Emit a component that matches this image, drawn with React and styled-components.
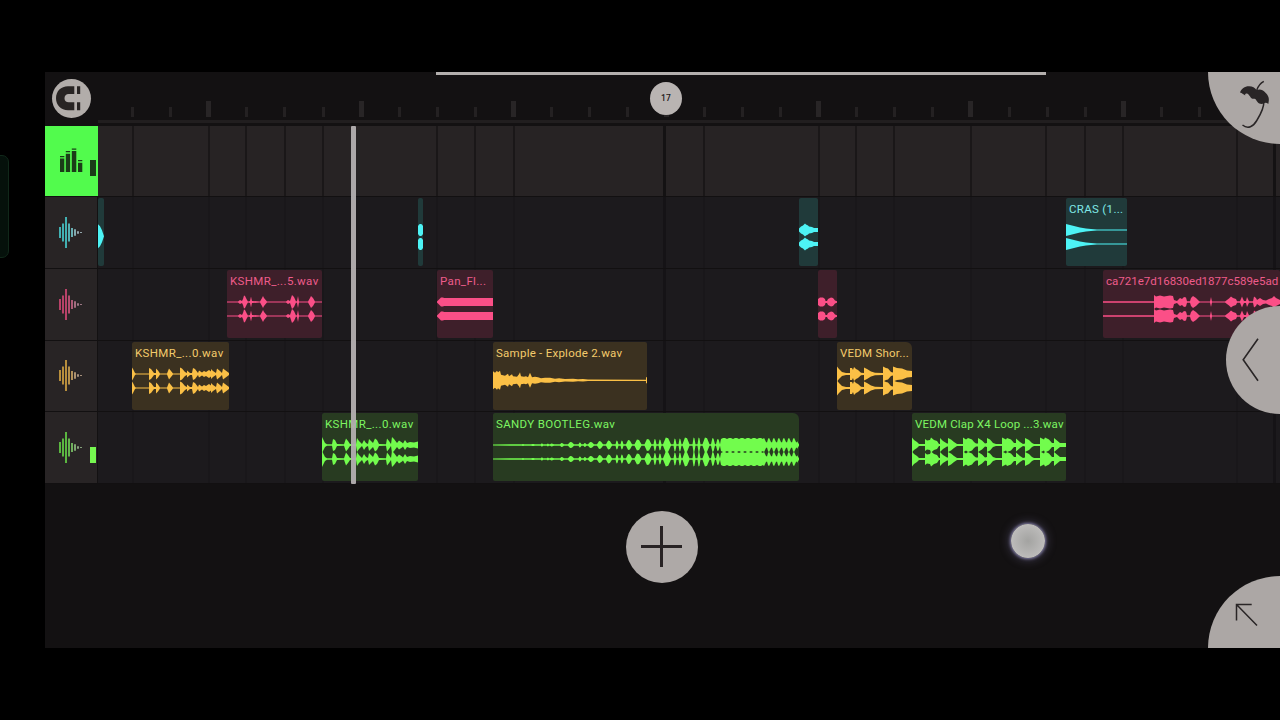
import styled, { createGlobalStyle } from 'styled-components'

const CYAN = { wave: '#4df3f5', text: '#7fe8e6', back: '#203a3a', dim: '#9fb4bb' }
const PINK = { wave: '#fb4f87', text: '#ee5c8b', back: '#3e1f2a', dim: '#a8808e' }
const GOLD = { wave: '#fbc046', text: '#f3cb6c', back: '#3b3120', dim: '#b59d86' }
const LIME = { wave: '#72fc4d', text: '#7df562', back: '#283b21', dim: '#8fae84' }

const GRID = [132, 208, 245, 284, 322, 436, 474, 513, 703, 818, 855, 893, 970, 1045, 1084, 1122, 1236]
const BARS = [663, 1273]
const LANE_X = 98

// envelopes are "x amp" pairs, mirrored around the centre line of each channel
const tracks = [
  {
    tone: CYAN,
    height: 72,
    clips: [
      { x: 98, w: 6, mono: true, env: '0 12 2 10 3 8 4 6 5 3 6 0' },
      { x: 418, w: 5, env: '0 4 1 5.5 2 6 3 6 4 5.5 5 4' },
      { x: 799, w: 19, env: '0 1.5 2 3.5 4 4.5 6 6.5 7 5.5 9 4.5 10 3.5 13 3 15 2 19 2' },
      { x: 1066, w: 61, name: 'CRAS (1...', gap: 0.32, env: '0 6 2 5.5 6 4.5 10 3.5 14 2.5 20 1.5 25 1 31 0.6 61 0.6' },
    ],
  },
  {
    tone: PINK,
    height: 72,
    clips: [
      { x: 227, w: 95, name: 'KSHMR_...5.wav', gap: 0.36, env: '0 .6 11 .6 13 2 15 1 16 3 17 6.5 18 6 20 2 21 .6 23 1 24 5.5 25 1 33 .6 35 4 36 6 37 4 40 .6 59 .6 61 2 63 1 64 4 65 7 67 5 69 .6 70 1 71 6 72 .6 81 .6 83 4 84 6 86 4 88 .6 95 .6' },
      { x: 437, w: 56, name: 'Pan_Fl...', gap: 0.35, env: '0 .5 2 2.5 4 4.5 6 4.5 7 4 56 4' },
      { x: 818, w: 19, env: '0 3 2 4.5 5 4.5 7 3 7.5 1 9 1 10 3 13 4.5 15 4 17 1.5 19 .7' },
      { x: 1103, w: 177, name: 'ca721e7d16830ed1877c589e5ad', gap: 0, env: '0 .8 51 .8 51 7 53 5.5 57 6.5 61 5.5 67 6.5 70 6 71 2 74 1 77 4 79 3 81 5 83 4.5 84 .7 87 .7 88 4 90 6 93 4 96 1 97 .6 107 .6 108 5 109 .6 122 .6 124 2 126 3.5 128 5.5 130 4 133 3 134 .7 137 .7 139 5.5 140 3 141 1 143 1 144 5 146 .7 150 .7 151 5.5 153 4 154 2 157 4 160 2 163 1.5 166 3 169 4 171 6 173 4 177 2' },
    ],
  },
  {
    tone: GOLD,
    height: 71,
    clips: [
      { x: 132, w: 97, name: 'KSHMR_...0.wav', gap: 0.36, env: '0 6.5 1 5 3 1 4 .6 17 .6 17 6 19 5 22 1 24 1 24 5.5 26 3.5 28 .6 35 .6 37 5.5 39 3 41 .6 48 .6 48 6.5 50 5.5 53 2 55 1 55 3.5 58 1 60 1 61 6 63 5 66 1 67 3.5 70 1.5 72 3 74 2 77 4 79 2.5 79 5 81 3 84 1 85 5.5 88 3 90 1 91 5.5 93 4 97 1' },
      { x: 493, w: 154, name: 'Sample - Explode 2.wav', gap: 0.25, mono: true, env: '0 9 2 7.5 4 9.5 5 8 7 9.5 8 5.500 12 4.500 15 6.500 16 4 19 6 20 4 24 3.5 26 6 27 8 28 4 31 3.500 33 4 35 3 37 7.5 39 3 42 3.5 45 3 48 2 52 2.5 57 2.5 62 1.5 66 2 72 1.2 80 1.5 85 1 90 1.3 95 .8 153 .6 153 3 154 3' },
      { x: 837, w: 75, name: 'VEDM Shor...', gap: 0.23, notch: true, env: '0 7.5 2 5 5 2 9 1 13 1 13 6 15 6 16 4 17 7 19 5 21 4 24 1.2 27 1 27 6.5 30 5 34 2.5 38 1.3 46 1 46 7.5 49 6 51 5.5 54 2 56 1.5 56 7.5 60 6 65 5.5 70 3.5 75 3' },
    ],
  },
  {
    tone: LIME,
    height: 72,
    meter: true,
    clips: [
      { x: 322, w: 96, name: 'KSHMR_...0.wav', gap: 0.36, env: '0 8 1 6 3 2 5 .8 10 .8 11 6 13 5 15 1 22 .8 24 6.5 26 4 28 1 34 .8 35 7 37 4 40 1 42 5 44 2 46 1 47 6 49 4 51 2 53 6.5 55 5 57 1 64 .8 65 6.5 67 4 69 1 70 8 72 6 75 2 77 4.5 80 2.5 81 1.5 83 5 85 2 88 3 92 2.5 96 3.5' },
      { x: 493, w: 306, name: 'SANDY BOOTLEG.wav', gap: 0.35, notch: true, beats: true },
      { x: 912, w: 154, name: 'VEDM Clap X4 Loop ...3.wav', gap: 0.17, env: '0 7.5 2 5 5 3 7 1 13 1 13 6 15 4.5 18 5 19 7.5 22 5 25 4 27 1 28 1 28 7 31 4 35 1.5 36 1.5 36 7 39 5.5 42 3 45 1 51 1 51 7.5 54 5.5 56 7 60 5.5 62 3 64 1.5 66 1.5 66 7 70 4.5 73 1.5 75 2 75 7 78 5.5 81 2 84 1 90 1 90 7.5 94 5.5 95 7 99 5.5 102 2 104 2 104 6.5 108 3 111 1 113 1.5 113 7 117 5 120 2 122 1 128 1 128 7.5 132 5.5 133 7.5 137 5.5 140 2 142 2 142 7 145 4.5 148 2 154 2' },
    ],
  },
]

// build-up: [centre, half width, amp], followed by a dense block and a spiky tail
const BUILD = [
  [30, 1, 1], [40, 2, 1], [49, 1, 1.7], [55, 1, 1.5], [59, 2, 1.5], [69, 2, 2], [78, 3, 3], [87, 1.5, 2.5],
  [92, 1.5, 2], [98, 3, 3], [107, 3, 4], [116, 3, 4.5], [124, 1.5, 4.5], [129, 1.5, 4.5], [136, 3, 5],
  [145, 3.5, 5.5], [155, 3.5, 6], [162, 1.5, 6], [167, 1.5, 5.5], [174, 4, 7.5], [182, 1.5, 6.5], [187, 1.5, 6.5],
  [193, 3.5, 7.5], [201, 1.5, 7.5], [206, 1.5, 7.5], [213, 3.5, 7.5], [220, 2, 7], [225, 2, 6],
]

function beatEnvelope() {
  let out = [0, 0.6]
  BUILD.forEach(([c, h, a]) => {
    out.push(c - h, 0.8, c - h * 0.3, a, c + h * 0.3, a * 0.9, c + h, 0.8)
  })
  for (let x = 228; x <= 269; x += 2) out.push(x, x % 3 ? 7 : 6)
  for (let x = 270; x <= 300; x += 5) out.push(x, 6, x + 1, 7.3, x + 3, 3, x + 4, 2.5)
  out.push(304, 4, 306, 0.8)
  return out
}

function wavePath(env, cy) {
  const n = Array.isArray(env) ? env : env.split(' ').map(Number)
  const top = []
  const low = []
  for (let i = 0; i < n.length; i += 2) {
    top.push(`${n[i]} ${cy - n[i + 1]}`)
    low.unshift(`${n[i]} ${cy + n[i + 1]}`)
  }
  return `M${top.concat(low).join('L')}Z`
}

const lines = (color, barColor) => [
  ...GRID.map(x => `linear-gradient(${color}, ${color}) ${x - LANE_X}px 0 / 2px 100% no-repeat`),
  ...BARS.map(x => `linear-gradient(${barColor}, ${barColor}) ${x - LANE_X}px 0 / 3px 100% no-repeat`),
].join(',')

const Clip = ({ clip, gap, tone }) => {
  const env = clip.beats ? beatEnvelope() : clip.env
  const centres = clip.mono ? [16.3] : [10, 24]
  return (
    <ClipBox $w={clip.w} $gap={gap} $back={tone.back} $notch={clip.notch}>
      <ClipName $color={tone.text} $spacing={clip.gap}>{clip.name}</ClipName>
      <svg width={clip.w} height="46" viewBox={`0 0 ${clip.w} 46`}>
        {centres.map(c => <path key={c} d={wavePath(env, c)} fill={tone.wave} />)}
      </svg>
    </ClipBox>
  )
}

const WaveIcon = ({ tone, id }) => (
  <svg width="24" height="32" viewBox="0 0 24 32">
    <defs>
      <linearGradient id={id} gradientUnits="userSpaceOnUse" x1="0" y1="0" x2="24" y2="0">
        <stop offset=".3" stopColor={tone.wave} stopOpacity=".75" />
        <stop offset=".75" stopColor={tone.dim} />
      </linearGradient>
    </defs>
    {[11, 18, 31, 18, 9, 6.5, 2.5, 1].map((h, i) => (
      <rect key={i} x={i * 3 + 0.1} y={15.5 - h / 2} width="1.8" height={h} fill={`url(#${id})`} />
    ))}
  </svg>
)

const App = () => {
  return (
    <>
      <Global />
      <Screen>
        <EdgeHandle />
        <Studio>
          <Ruler>
            <Corner>
              <Snap>
                <svg width="39" height="39" viewBox="0 0 39 39" fill="#282423">
                  <path d="M22.300 7.300H16C9 7.300 4 12.300 4 19.200S9 31.200 16 31.200h6.300v-8H16.700c-2.600 0-4.200-1.600-4.200-4s1.600-4.100 4.200-4.100h5.600z" />
                  <path d="M25 7.300h3.200v7.800H25zM25 23.200h3.200v8H25z" />
                </svg>
              </Snap>
            </Corner>
            <Ticks>
              {Array.from({ length: 30 }, (_, i) => (
                <TickCell key={i}><Tick $big={i % 4 === 2} /></TickCell>
              ))}
            </Ticks>
          </Ruler>

          <Row $h={71}>
            <Head $active>
              <IconSlot>
                <svg width="24" height="26" viewBox="0 0 24 26" fill="#1b3c18">
                  <path d="M1 8h4.300v1.300H1zM1 10.500h4.300V24H1zM6.800 3h4.300v1.300H6.800zM6.800 5.800h4.300V24H6.800zM12.800 .5h4.500v1.200h-4.500zM12.800 3h4.500v21h-4.500zM19 12h4.300v1.300H19zM19 14.800h4.300V24H19z" />
                </svg>
              </IconSlot>
              <Meter $color="#1b3c18" />
            </Head>
            <Lane $pattern />
          </Row>

          {tracks.map((t, n) => (
            <Row key={n} $h={t.height}>
              <Head>
                <IconSlot><WaveIcon tone={t.tone} id={`tone${n}`} /></IconSlot>
                {t.meter && <Meter $color="#76f750" />}
              </Head>
              <Lane>
                {t.clips.map((c, i) => {
                  const prev = t.clips[i - 1]
                  const end = prev ? prev.x + prev.w : LANE_X
                  return <Clip key={c.x} clip={c} gap={c.x - end} tone={t.tone} />
                })}
              </Lane>
            </Row>
          ))}

          <Footer>
            <AddButton>
              <svg width="42" height="42" viewBox="0 0 42 42" stroke="#282324" strokeWidth="3">
                <path d="M20.500 0v41M0 20.500h41" />
              </svg>
            </AddButton>
          </Footer>

          <Overview />
          <BarBadge>17</BarBadge>
          <Playhead />

          <RoundButton $top={-72} $r={72}>
            <svg width="72" height="72" viewBox="0 0 72 72" fill="none" stroke="#292526">
              <path d="M55.800 9.300C52 11.300 50 14.500 48.800 18" strokeWidth="1.500" />
              <path d="M32 20.500c1.200-3.700 5-6.500 9.200-6.300 3.300 0 5.800 1.700 7.300 3.900 3-1.300 6.300-.7 8.300 1.900 1.300 1.600 2.200 1.500 3.300 4.300 1.200 2.500.8 4.600.2 7.700-1.300-1.200-3-1.800-4.300-.7-2.300 1.400-5 .6-6.300-1-1.500-1.500-1.700-3.500-3.300-3.500-2 .3-3.500-.3-4.300-2.200-1.200-1.700-2-3.300-3.500-3.200-1.300-.2-1.800 1-1.300 2.200-1.300-.9-3.300-2.600-5.300-3.100z" fill="#292526" stroke="none" />
              <path d="M55.800 29c.4 5-3 13-7 19.500-3.500 6-8.800 9-14.300 4.500" strokeWidth="1.500" />
            </svg>
          </RoundButton>
          <RoundButton $top={233.500} $r={54}>
            <svg width="54" height="108" viewBox="0 0 54 108" fill="none" stroke="#292526" strokeWidth="1.600">
              <path d="M32 32.800L17.200 53.800L32 74.800" />
            </svg>
          </RoundButton>
          <RoundButton $top={504} $r={72} $upper>
            <svg width="72" height="72" viewBox="0 0 72 72" fill="none" stroke="#292526" strokeWidth="1.500">
              <path d="M43.700 28.500H28.500V44.500M28.500 28.500L49 49.500" />
            </svg>
          </RoundButton>
          <Touch />
        </Studio>
      </Screen>
    </>
  )
}

const Global = createGlobalStyle`
  body {
    margin: 0;
    background: #000;
    overflow: hidden;
  }
  * {
    box-sizing: border-box;
  }
  svg {
    display: block;
    flex: none;
  }
`

const Screen = styled.div`
  position: relative;
  width: 1280px;
  height: 720px;
  padding: 72px 0 72px 45px;
  background: #000;
  overflow: hidden;
  font-family: Roboto, 'Liberation Sans', sans-serif;
`

const EdgeHandle = styled.div`
  position: absolute;
  left: -11px;
  top: 155px;
  width: 20px;
  height: 103px;
  border-radius: 7px;
  border: 1px solid #10281a;
  background: #05110b;
`

const Studio = styled.div`
  position: relative;
  display: flex;
  flex-direction: column;
  height: 576px;
  background: #131112;
  overflow: hidden;
`

const Ruler = styled.div`
  display: flex;
  height: 54px;
`

const Corner = styled.div`
  width: 53px;
  padding: 7px;
`

const Snap = styled.div`
  width: 39px;
  height: 39px;
  border-radius: 50%;
  background: #b2adaa;
`

const Ticks = styled.div`
  flex: 1;
  display: flex;
  align-items: flex-end;
  height: 51px;
  padding: 0 0 3px 15.5px;
  overflow: hidden;
  border-bottom: 3px solid #211e1f;
`

const TickCell = styled.div`
  flex: 0 0 38.12px;
  display: flex;
  justify-content: center;
`

const Tick = styled.div`
  width: ${p => (p.$big ? 5 : 3)}px;
  height: ${p => (p.$big ? 16 : 10)}px;
  background: ${p => (p.$big ? '#282526' : '#242122')};
`

const Row = styled.div`
  display: flex;
  height: ${p => p.$h}px;
  border-bottom: 1px solid #121011;
`

const Head = styled.div`
  display: flex;
  align-items: center;
  width: ${p => (p.$active ? 53 : 52)}px;
  margin-right: ${p => (p.$active ? 0 : 1)}px;
  padding-left: 14px;
  background: ${p => (p.$active ? '#52fb4d' : '#282425')};
`

const IconSlot = styled.div`
  width: 31px;
`

const Meter = styled.div`
  width: 6px;
  height: 16px;
  margin-top: 14px;
  background: ${p => p.$color};
`

const Lane = styled.div`
  flex: 1;
  display: flex;
  min-width: 0;
  padding-top: 1px;
  overflow: hidden;
  background: ${p => (p.$pattern ? lines('#1a1718', '#141213') : lines('#19171a', '#151316'))}, ${p => (p.$pattern ? '#272324' : '#1c1a1d')};
`

const ClipBox = styled.div`
  flex: none;
  width: ${p => p.$w}px;
  height: 68px;
  margin-left: ${p => p.$gap}px;
  border-radius: 2px;
  border-top-right-radius: ${p => (p.$notch ? 6 : 2)}px;
  background: ${p => p.$back};
  overflow: hidden;
`

const ClipName = styled.div`
  height: 22px;
  padding: 5px 0 0 3px;
  font-size: 11.5px;
  line-height: 13px;
  white-space: nowrap;
  letter-spacing: ${p => p.$spacing || 0}px;
  color: ${p => p.$color};
`

const Footer = styled.div`
  display: flex;
  justify-content: center;
  padding: 27px 1px 0 0;
`

const AddButton = styled.div`
  display: flex;
  align-items: center;
  justify-content: center;
  width: 72px;
  height: 72px;
  border-radius: 50%;
  background: #aea9a7;
`

const Overview = styled.div`
  position: absolute;
  left: 391px;
  top: 0;
  width: 610px;
  height: 3px;
  background: #b3afad;
`

const BarBadge = styled.div`
  position: absolute;
  left: 605px;
  top: 10px;
  width: 32px;
  height: 33px;
  border-radius: 50%;
  background: #b9b4b2;
  color: #1c1819;
  font-size: 8.5px;
  font-weight: 500;
  line-height: 32px;
  letter-spacing: 0.2px;
  text-align: center;
`

const Playhead = styled.div`
  position: absolute;
  left: 306px;
  top: 54px;
  width: 5px;
  height: 358px;
  border-radius: 1px;
  background: rgba(178, 174, 175, 0.96);
`

const RoundButton = styled.div`
  position: absolute;
  right: -${p => p.$r}px;
  top: ${p => p.$top}px;
  width: ${p => p.$r * 2}px;
  height: ${p => p.$r * 2}px;
  padding-top: ${p => (p.$r === 72 && !p.$upper ? 72 : 0)}px;
  border-radius: 50%;
  background: #aca7a5;
`

const Touch = styled.div`
  position: absolute;
  left: 966px;
  top: 452px;
  width: 34px;
  height: 34px;
  border-radius: 50%;
  background: radial-gradient(circle, #a3a3a1 0%, #b9b8b7 60%, #cccaca 100%);
  box-shadow: 0 0 3px 1px rgba(160, 155, 205, 0.75), 0 0 9px 3px rgba(100, 95, 130, 0.4);
`

export default App
